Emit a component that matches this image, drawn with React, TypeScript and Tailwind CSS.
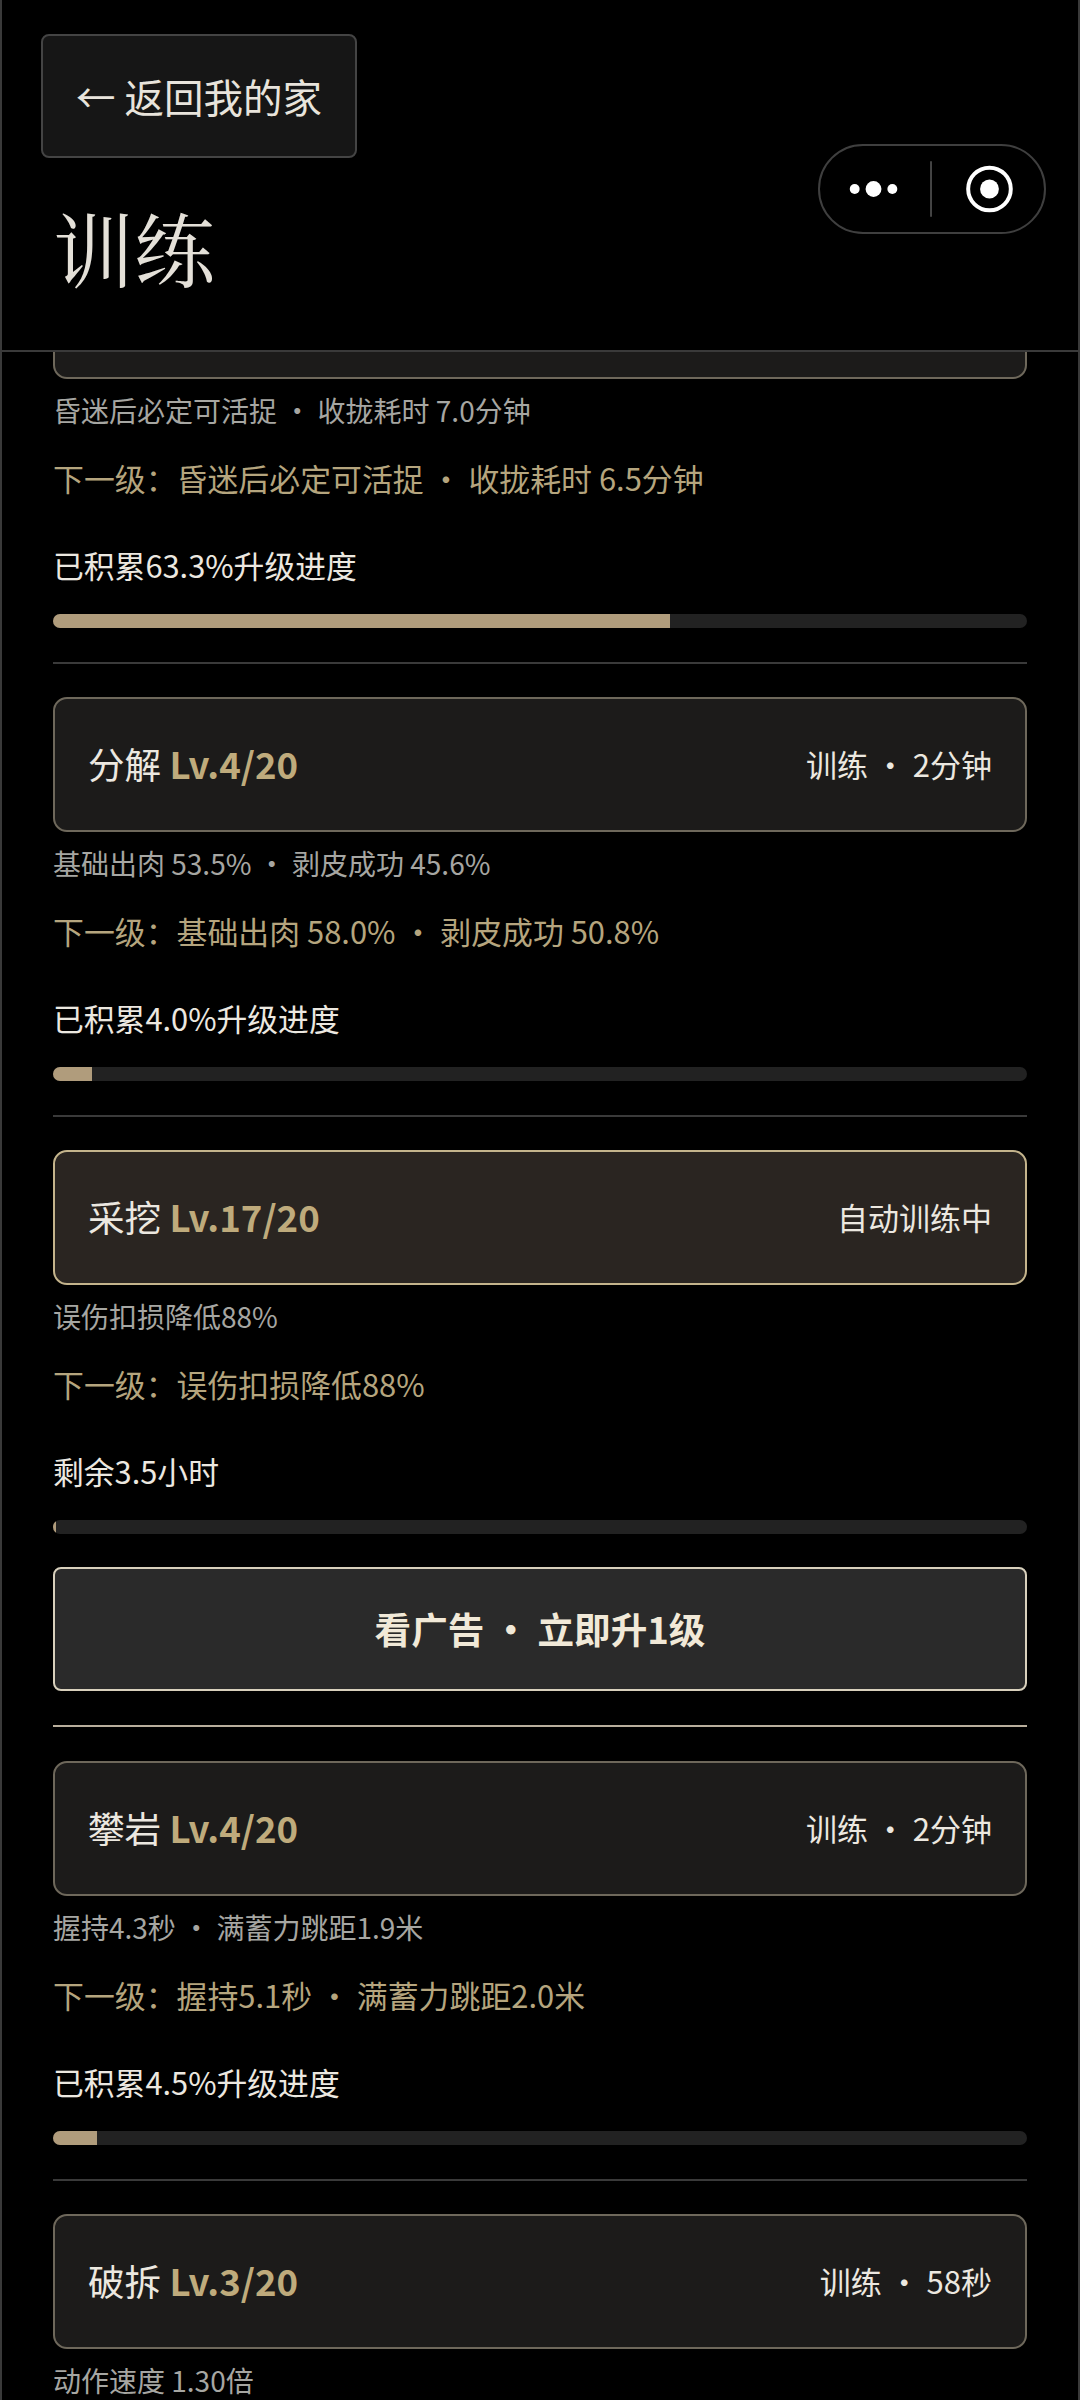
type Skill = {
  name?: string;
  level?: string;
  tag?: string;
  desc: string;
  next: string;
  label: string;
  progress: number;
  active?: boolean;
};

const skills: Skill[] = [
  {
    desc: "昏迷后必定可活捉 ・ 收拢耗时 7.0分钟",
    next: "下一级：昏迷后必定可活捉 ・ 收拢耗时 6.5分钟",
    label: "已积累63.3%升级进度",
    progress: 63.3,
  },
  {
    name: "分解",
    level: "Lv.4/20",
    tag: "训练 ・ 2分钟",
    desc: "基础出肉 53.5% ・ 剥皮成功 45.6%",
    next: "下一级：基础出肉 58.0% ・ 剥皮成功 50.8%",
    label: "已积累4.0%升级进度",
    progress: 4,
  },
  {
    name: "采挖",
    level: "Lv.17/20",
    tag: "自动训练中",
    desc: "误伤扣损降低88%",
    next: "下一级：误伤扣损降低88%",
    label: "剩余3.5小时",
    progress: 0.3,
    active: true,
  },
  {
    name: "攀岩",
    level: "Lv.4/20",
    tag: "训练 ・ 2分钟",
    desc: "握持4.3秒 ・ 满蓄力跳距1.9米",
    next: "下一级：握持5.1秒 ・ 满蓄力跳距2.0米",
    label: "已积累4.5%升级进度",
    progress: 4.5,
  },
  {
    name: "破拆",
    level: "Lv.3/20",
    tag: "训练 ・ 58秒",
    desc: "动作速度 1.30倍",
    next: "下一级：动作速度 1.35倍",
    label: "已积累12.0%升级进度",
    progress: 12,
  },
];

const SkillRow = ({ skill }: { skill: Skill }) => (
  <div>
    <div
      className={
        skill.active
          ? "h-[134.5px] rounded-[14px] border-2 border-[#c4b48c] bg-[#2a2521] px-[33px] flex items-center justify-between"
          : "h-[134.5px] rounded-[14px] border-2 border-[#6e685b] bg-[#1c1b1a] px-[33px] flex items-center justify-between"
      }
    >
      <div className="-mt-[1px] text-[36.6px] leading-[48px] text-[#ece8e0]">
        {skill.name} <span className="font-bold text-[#bfab7c]">{skill.level}</span>
      </div>
      <div className="-mt-[1px] text-[31px] leading-[40px] text-[#ece8e0]">{skill.tag}</div>
    </div>
    <div className="mt-[11.5px] text-[28px] leading-[40px] text-[#a6a6a2]">{skill.desc}</div>
    <div className="mt-[28px] text-[30.9px] leading-[40px] text-[#b5a57e]">{skill.next}</div>
    <div className="mt-[47px] text-[30.8px] leading-[40px] text-[#ece8e0]">{skill.label}</div>
    <div className="mt-[29px] h-[14px] rounded-full bg-[#222222] overflow-hidden">
      <div className="h-full bg-[#b09c7c]" style={{ width: `${skill.progress}%` }} />
    </div>
    {skill.active && (
      <button className="mt-[33px] w-full h-[124px] rounded-[8px] border-2 border-[#d8d0bc] bg-[#2a2a2a] text-[36.6px] font-bold text-[#f1e9d8]">
        看广告 ・ 立即升1级
      </button>
    )}
    <div
      className={
        skill.active
          ? "mt-[34px] mb-[34px] h-[2px] bg-[#b8ae9c]"
          : "mt-[34px] mb-[33px] h-[2px] bg-[#3a3a3a]"
      }
    />
  </div>
);

const App = () => {
  return (
    <div
      className="h-[2400px] overflow-hidden bg-black border-x-2 border-[#3a3a3a] flex flex-col"
      style={{ fontFamily: '"Noto Sans CJK SC", sans-serif' }}
    >
      <header className="relative h-[352px] shrink-0 border-b-2 border-[#3a3a3a]">
        <button className="ml-[39px] mt-[34px] w-[316px] h-[124px] rounded-[8px] border-2 border-[#444444] bg-[#161616] text-[39.5px] text-[#e8e4dc] block">
          ← 返回我的家
        </button>
        <h1
          className="ml-[51px] mt-[48px] text-[81px] leading-[80px] font-normal text-[#e4e0d8]"
          style={{ fontFamily: '"Noto Serif CJK SC", "Liberation Serif", serif' }}
        >
          训练
        </h1>
        <div className="absolute right-[32px] top-[144px] w-[228px] h-[90px] rounded-full border-2 border-[#3f3f3f] flex items-center">
          <svg width="226" height="86" viewBox="0 0 226 86" fill="none">
            <circle cx="35" cy="43" r="5" fill="#fff" />
            <circle cx="54" cy="43" r="8" fill="#fff" />
            <circle cx="73" cy="43" r="5" fill="#fff" />
            <rect x="111" y="15" width="2" height="56" fill="#444" />
            <circle cx="171" cy="43" r="21.5" stroke="#fff" strokeWidth="4" />
            <circle cx="171" cy="43" r="9.5" fill="#fff" />
          </svg>
        </div>
      </header>
      <main className="flex-1 overflow-hidden px-[51px]">
        <div className="-mt-[108px]">
          {skills.map((skill, i) => (
            <SkillRow key={i} skill={skill} />
          ))}
        </div>
      </main>
    </div>
  );
};

export default App;
